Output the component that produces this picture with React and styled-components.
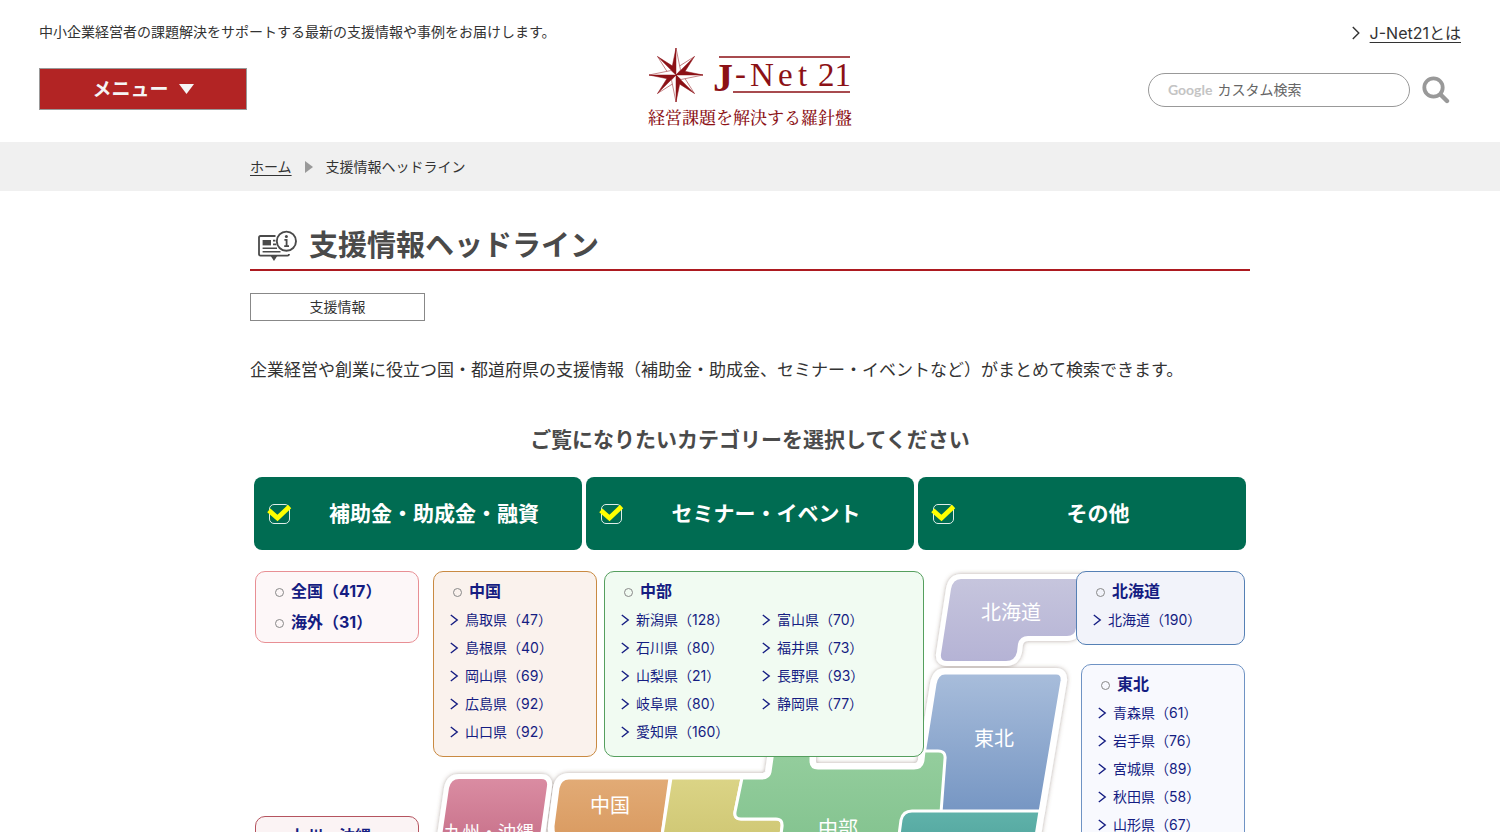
import React from "react";
import styled, { createGlobalStyle } from "styled-components";

const GlobalStyle = createGlobalStyle`
  * {
    box-sizing: border-box;
  }

  body {
    margin: 0;
    background-color: #fff;
    color: #333;
    font-family: Inter, "Noto Sans CJK JP", sans-serif;
    font-size: 14px;
    line-height: 24px;
  }

  h1, h2, h3, p, ul {
    margin: 0;
    padding: 0;
  }

  ul {
    list-style: none;
  }

  a {
    color: inherit;
  }

  button, input {
    font-family: inherit;
  }
`;

const Header = styled.header`
  display: grid;
  grid-template-columns: 1fr auto 1fr;
  padding: 20px 39px 13px;
`;

const HeaderSide = styled.div`
  display: flex;
  flex-direction: column;
  align-items: ${({ $end }) => ($end ? "flex-end" : "flex-start")};
  gap: ${({ $end }) => ($end ? "27px" : "24px")};
`;

const Tagline = styled.p`
  white-space: nowrap;
`;

const MenuButton = styled.button`
  display: flex;
  align-items: center;
  justify-content: center;
  gap: 10px;
  width: 208px;
  height: 42px;
  padding: 0 0 4px;
  border: 1px solid #999;
  background-color: #b22424;
  color: #f5f5f5;
  font-size: 19px;
  font-weight: 700;
  cursor: pointer;

  svg {
    margin-top: 4px;
  }
`;

const LogoLink = styled.a`
  display: block;
  padding-top: 28px;
  color: #8c1116;
  text-align: center;
  text-decoration: none;

  svg {
    display: block;
  }

  span {
    display: block;
    font-family: "Noto Serif CJK JP", "Noto Sans CJK JP", serif;
    font-size: 17px;
    font-weight: 500;
    line-height: 24px;
  }
`;

const AboutLink = styled.a`
  display: flex;
  align-items: center;
  gap: 10px;
  font-size: 16px;
  line-height: 26px;
  text-decoration: none;

  span {
    text-decoration: underline;
    text-underline-offset: 3px;
  }
`;

const SearchForm = styled.form`
  display: flex;
  align-items: center;
  gap: 12px;
  padding-right: 11px;
`;

const SearchField = styled.label`
  display: flex;
  align-items: center;
  gap: 5px;
  width: 262px;
  height: 34px;
  padding: 0 19px;
  border: 1px solid #999;
  border-radius: 17px;

  span {
    color: #c4c4c4;
    font-family: Lato, sans-serif;
    font-size: 14px;
    font-weight: 700;
  }

  input {
    flex: 1;
    min-width: 0;
    padding: 0;
    border: 0;
    outline: 0;
    background: none;
    font-size: 14px;
    line-height: 24px;
  }

  input::placeholder {
    color: #666;
    opacity: 1;
  }
`;

const IconButton = styled.button`
  display: flex;
  padding: 0;
  border: 0;
  background: none;
  cursor: pointer;
`;

const CrumbBar = styled.nav`
  background-color: #f0f0f0;
`;

const Inner = styled.div`
  max-width: 1000px;
  margin: 0 auto;
`;

const Crumbs = styled(Inner)`
  display: flex;
  align-items: center;
  gap: 13px;
  height: 49px;

  a {
    text-underline-offset: 3px;
  }
`;

const PageTitle = styled.h1`
  display: flex;
  align-items: center;
  gap: 10px;
  margin-top: 32px;
  padding-left: 7px;
  border-bottom: 2px solid #ad1a20;
  color: #4a4a4a;
  font-size: 29px;
  line-height: 46px;
`;

const Tag = styled.p`
  width: 175px;
  margin-top: 22px;
  border: 1px solid #888;
  line-height: 26px;
  text-align: center;
`;

const Lead = styled.p`
  margin-top: 34px;
  font-size: 17px;
  line-height: 30px;
`;

const SubTitle = styled.h2`
  margin-top: 40px;
  color: #4a4a4a;
  font-size: 21px;
  line-height: 30px;
  text-align: center;
`;

const Categories = styled.div`
  display: grid;
  grid-template-columns: repeat(3, 1fr);
  gap: 4px;
  margin-top: 22px;
  padding: 0 4px;
`;

const Category = styled.label`
  display: flex;
  align-items: center;
  height: 73px;
  padding: 0 5px 0 14px;
  border-radius: 8px;
  background-color: #006c52;
  color: #fff;
  font-size: 21px;
  font-weight: 700;
  text-align: center;
  cursor: pointer;

  > span:last-child {
    flex: 1;
  }
`;

const Check = styled.span`
  position: relative;
  display: flex;

  input {
    appearance: none;
    width: 21px;
    height: 20px;
    margin: 0 1px;
    border: 1px solid #dfeeea;
    border-radius: 5px;
  }

  svg {
    position: absolute;
    left: -1px;
    top: 0;
    visibility: hidden;
    pointer-events: none;
  }

  input:checked + svg {
    visibility: visible;
  }
`;

const MapArea = styled.div`
  position: relative;
  display: flex;
  align-items: flex-start;
  margin-top: 21px;
  padding: 0 5px;
`;

const MapDrawing = styled.svg`
  position: absolute;
  left: 0;
  top: 0;
  overflow: visible;
  pointer-events: none;
`;

const Column = styled.div`
  position: relative;
  display: flex;
  flex-direction: column;
  align-items: flex-end;
  margin-left: ${({ $before }) => $before || "0"};
`;

const Panel = styled.section`
  width: ${({ $width }) => $width || 164}px;
  margin-top: ${({ $above }) => $above || 0}px;
  padding: 4px 0 ${({ $short }) => ($short ? 5 : 10)}px 16px;
  border: 1px solid ${({ $line }) => $line};
  border-radius: 10px;
  background-color: ${({ $fill }) => $fill};
  color: #151d82;

  a {
    text-decoration: none;
  }
`;

const PanelHeading = styled.h3`
  display: flex;
  align-items: center;
  gap: 7px;
  padding-left: 3px;
  font-size: 16px;
  line-height: 30px;

  & + & {
    margin-top: 1px;
  }

  &::before {
    content: "";
    width: 7px;
    height: 7px;
    margin-top: 2px;
    border: 1px solid #888;
    border-radius: 50%;
  }
`;

const PrefList = styled.ul`
  display: grid;
  grid-template-columns: ${({ $double }) => ($double ? "141px 1fr" : "1fr")};

  a {
    display: flex;
    align-items: center;
    gap: 6px;
    line-height: 28px;
    white-space: nowrap;
  }
`;

const ChevronIcon = ({ large }) => (
  <svg width={large ? 8 : 9} height={large ? 14 : 12} viewBox={large ? "0 0 8 14" : "0 0 9 12"} fill="none">
    <path
      d={large ? "M0.8 1 6.8 7 0.8 13" : "M0.8 1 7.2 6 0.8 11"}
      stroke="currentColor"
      strokeWidth="1.4"
    />
  </svg>
);

const SearchIcon = () => (
  <svg width="28" height="28" viewBox="0 0 28 28" fill="none" stroke="#999">
    <circle cx="11.5" cy="11.5" r="9.2" strokeWidth="3.8" />
    <path d="M18.5 18.5 25 25" strokeWidth="4.4" strokeLinecap="round" />
  </svg>
);

const HeadlineIcon = () => (
  <svg width="42" height="34" viewBox="0 0 42 34" fill="none" stroke="#4a4a4a">
    <path d="M18.5 7H3.5Q2 7 2 8.5V25Q2 26.6 3.5 26.6H30.5Q32 26.6 32 25" strokeWidth="1.8" />
    <path d="M13.6 26.8 17 32 20.4 26.8Z" fill="#4a4a4a" stroke="none" />
    <path d="M5.6 11H14V16.4H5.6Z" fill="#4a4a4a" stroke="none" />
    <path d="M16 11.6H18.4M16 15.4H19.2M5.6 19.2H20M5.6 22.8H23.5" strokeWidth="1.6" />
    <circle cx="29.4" cy="12.2" r="9.6" strokeWidth="1.9" />
    <circle cx="29.4" cy="7.4" r="1.5" fill="#4a4a4a" stroke="none" />
    <path d="M27.4 10.8H29.6V17.2M27.2 17.2H32" strokeWidth="1.8" />
  </svg>
);

const points = [0, 90, 180, 270];

const Logo = () => (
  <svg width="204" height="57" viewBox="0 0 204 57" fill="#8c1116">
    {/* compass rose */}
    <g transform="translate(28 27)" stroke="#8c1116" strokeWidth="0.5">
      {points.map((angle) => (
        <g key={angle} transform={`rotate(${angle + 45})`}>
          <path d="M0 0 4.5 -6 0 -26Z" />
          <path d="M0 0 -4.5 -6 0 -26Z" fill="#fff" />
        </g>
      ))}
      {points.map((angle) => (
        <g key={angle} transform={`rotate(${angle})`}>
          <path d="M0 0 -4.5 -5 0 -27Z" />
          <path d="M0 0 4.5 -5 0 -27Z" fill="#fff" />
        </g>
      ))}
    </g>
    <path d="M71 9H202M85 44H202" stroke="#8c1116" strokeWidth="1.6" />
    <g fontFamily="Liberation Serif, serif" fontSize="33">
      <text x="65" y="43" fontSize="40" fontWeight="700">J</text>
      <text x="87" y="37">-</text>
      <text x="102" y="38">N</text>
      <text x="130" y="38">e</text>
      <text x="150" y="38">t</text>
      <text x="170" y="38">21</text>
    </g>
  </svg>
);

const landmass = [
  {
    id: "chugoku",
    colors: ["#e2ab76", "#d99a60"],
    d: "M569 778H670L661 842H562Q552 836 553 826L558 788Q560 778 569 778Z",
  },
  {
    id: "kinki",
    colors: ["#dbd486", "#c8bf69"],
    d: "M671 778H742L735 812Q734 819 741 819H776Q783 819 782 827L775 880H655Z",
  },
  {
    id: "tohoku",
    colors: ["#a8bddb", "#7696c3"],
    d: "M945 673H1056Q1063 673 1062 681L1040 812H915L935 684Q937 673 945 673Z",
  },
  {
    id: "chubu",
    colors: ["#98d0a0", "#7dbf8a"],
    d: "M742 778H761Q769 778 770 772L776 730H811V761Q811 768 818 768H914Q922 768 923 760L924 751H938Q946 751 945 759L936 880H775L782 827Q783 819 776 819H741Q734 819 735 812Z",
  },
  {
    id: "kanto",
    colors: ["#60b2aa", "#469c95"],
    d: "M912 811H1040L1029 880H893L901 820Q903 811 912 811Z",
  },
];

const islands = [
  {
    id: "hokkaido",
    colors: ["#c6c5dd", "#b5b3d5"],
    d: "M961 579H1084L1076 628Q1075 636 1067 636H1028Q1020 636 1018 644L1017 652Q1015 661 1006 661H947Q940 661 941 654L951 589Q953 579 961 579Z",
  },
  {
    id: "kyushu",
    colors: ["#da8ca2", "#c66f88"],
    d: "M459 779H541Q548 779 547 786L538 850H440L449 788Q451 779 459 779Z",
  },
];

const mapLabels = [
  { name: "北海道", x: 1011, y: 620 },
  { name: "東北", x: 994, y: 746 },
  { name: "中国", x: 610, y: 813 },
  { name: "中部", x: 838, y: 836 },
  { name: "九州・沖縄", x: 489, y: 839, size: 18 },
];

const JapanMap = () => (
  <MapDrawing width="1000" height="300" viewBox="250 571 1000 300" aria-hidden="true">
    <defs>
      {[...landmass, ...islands].map(({ id, colors }) => (
        <linearGradient key={id} id={id} x1="0" y1="0" x2="0" y2="1">
          <stop offset="0" stopColor={colors[0]} />
          <stop offset="1" stopColor={colors[1]} />
        </linearGradient>
      ))}
      <filter id="shade" x="-10%" y="-10%" width="120%" height="120%">
        <feDropShadow dx="0" dy="0" stdDeviation="2.2" floodColor="#6b5548" floodOpacity="0.5" />
      </filter>
    </defs>
    <g filter="url(#shade)" fill="#fff" stroke="#fff" strokeWidth="10" strokeLinejoin="round">
      {[...landmass, ...islands].map(({ id, d }) => (
        <path key={id} d={d} />
      ))}
    </g>
    {landmass.map(({ id, d }) => (
      <path key={id} d={d} fill={`url(#${id})`} stroke="#fff" strokeWidth="3" />
    ))}
    {islands.map(({ id, d }) => (
      <path key={id} d={d} fill={`url(#${id})`} />
    ))}
    <g fill="#fff" fontSize="20" textAnchor="middle">
      {mapLabels.map(({ name, x, y, size }) => (
        <text key={name} x={x} y={y} fontSize={size}>
          {name}
        </text>
      ))}
    </g>
  </MapDrawing>
);

const RegionPanel = ({ headings, prefs = [], double, ...rest }) => (
  <Panel {...rest}>
    {headings.map((heading) => (
      <PanelHeading key={heading}>
        <a href="#region">{heading}</a>
      </PanelHeading>
    ))}
    <PrefList $double={double}>
      {prefs.map((pref) => (
        <li key={pref}>
          <a href="#pref">
            <ChevronIcon />
            {pref}
          </a>
        </li>
      ))}
    </PrefList>
  </Panel>
);

const categories = ["補助金・助成金・融資", "セミナー・イベント", "その他"];

const App = () => {
  return (
    <>
      <GlobalStyle />
      <Header>
        <HeaderSide>
          <Tagline>中小企業経営者の課題解決をサポートする最新の支援情報や事例をお届けします。</Tagline>
          <MenuButton type="button">
            メニュー
            <svg width="15" height="10" viewBox="0 0 15 10" fill="currentColor">
              <path d="M0 0H15L7.5 10Z" />
            </svg>
          </MenuButton>
        </HeaderSide>
        <LogoLink href="#top">
          <Logo />
          <span>経営課題を解決する羅針盤</span>
        </LogoLink>
        <HeaderSide $end>
          <AboutLink href="#about">
            <ChevronIcon large />
            <span>J-Net21とは</span>
          </AboutLink>
          <SearchForm>
            <SearchField>
              <span>Google</span>
              <input type="text" placeholder="カスタム検索" />
            </SearchField>
            <IconButton type="button" aria-label="検索">
              <SearchIcon />
            </IconButton>
          </SearchForm>
        </HeaderSide>
      </Header>

      <CrumbBar>
        <Crumbs>
          <a href="#home">ホーム</a>
          <svg width="8" height="12" viewBox="0 0 8 12" fill="#999">
            <path d="M0 0 8 6 0 12Z" />
          </svg>
          <span>支援情報ヘッドライン</span>
        </Crumbs>
      </CrumbBar>

      <Inner as="main">
        <PageTitle>
          <HeadlineIcon />
          支援情報ヘッドライン
        </PageTitle>
        <Tag>支援情報</Tag>
        <Lead>
          企業経営や創業に役立つ国・都道府県の支援情報（補助金・助成金、セミナー・イベントなど）がまとめて検索できます。
        </Lead>
        <SubTitle>ご覧になりたいカテゴリーを選択してください</SubTitle>

        <Categories>
          {categories.map((category) => (
            <Category key={category}>
              <Check>
                <input type="checkbox" defaultChecked />
                <svg width="25" height="20" viewBox="0 0 25 20" fill="none">
                  <path d="M1.8 6.4 10.5 14 22.6 2.6" stroke="#ff0" strokeWidth="4.8" />
                </svg>
              </Check>
              <span>{category}</span>
            </Category>
          ))}
        </Categories>

        <MapArea>
          <JapanMap />
          <Column>
            <RegionPanel headings={["全国（417）", "海外（31）"]} $line="#e88f94" $fill="#fdf7f8" $short />
            <RegionPanel headings={["九州・沖縄"]} $line="#b5545f" $fill="#fbf3f4" $above={173} />
          </Column>
          <Column $before="14px">
            <RegionPanel
              headings={["中国"]}
              prefs={["鳥取県（47）", "島根県（40）", "岡山県（69）", "広島県（92）", "山口県（92）"]}
              $line="#c98a42"
              $fill="#faf2ed"
            />
          </Column>
          <Column $before="7px">
            <RegionPanel
              headings={["中部"]}
              prefs={[
                "新潟県（128）",
                "富山県（70）",
                "石川県（80）",
                "福井県（73）",
                "山梨県（21）",
                "長野県（93）",
                "岐阜県（80）",
                "静岡県（77）",
                "愛知県（160）",
              ]}
              double
              $width={320}
              $line="#559f5e"
              $fill="#f1fbf2"
            />
          </Column>
          <Column $before="auto">
            <RegionPanel
              headings={["北海道"]}
              prefs={["北海道（190）"]}
              $width={169}
              $line="#5580b5"
              $fill="#f2f3fa"
            />
            <RegionPanel
              headings={["東北"]}
              prefs={["青森県（61）", "岩手県（76）", "宮城県（89）", "秋田県（58）", "山形県（67）"]}
              $line="#6f93c4"
              $fill="#f8f9fe"
              $above={19}
            />
          </Column>
        </MapArea>
      </Inner>
    </>
  );
};

export default App;
